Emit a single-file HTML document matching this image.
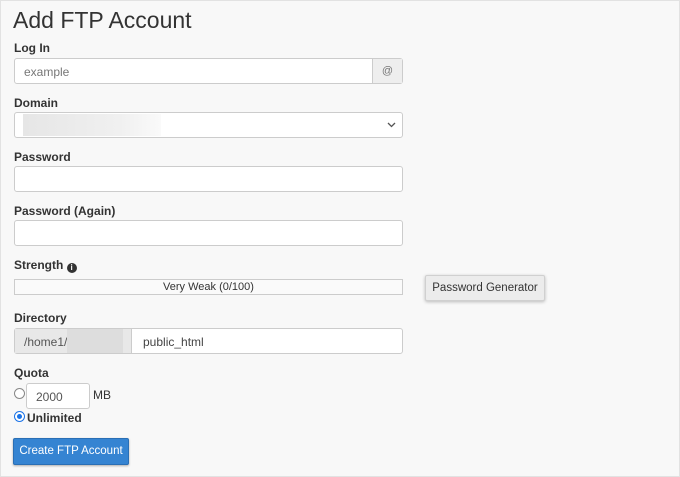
<!DOCTYPE html><html><head><style>
body{margin:0;width:680px;height:477px;background:#fff;font-family:"Liberation Sans",sans-serif;overflow:hidden}
.pg{position:absolute;left:0;top:0;width:678px;height:475px;background:#f8f8f8;border:1px solid #e2e2e2}
.a{position:absolute}
.l{position:absolute;left:13px;font-size:12px;font-weight:bold;color:#333}
.in{position:absolute;left:13px;width:387px;height:24px;background:#fff;border:1px solid #ccc;border-radius:3px;font-size:12px;color:#555;box-sizing:content-box}
</style></head><body><div class="pg">
<div class="a" style="left:12px;top:6px;font-size:23px;color:#333">Add FTP Account</div>
<div class="l" style="top:40px">Log In</div>
<div class="in" style="top:57px"><span class="a" style="left:9px;top:6px;color:#777">example</span>
<div class="a" style="right:0;top:0;width:29px;height:24px;background:#eee;border-left:1px solid #ccc;text-align:center;line-height:24px;color:#777;font-size:11px">@</div></div>
<div class="l" style="top:95px">Domain</div>
<div class="in" style="top:111px"><div class="a" style="left:8px;top:1px;width:138px;height:22px;background:linear-gradient(90deg,#e6e6e6,#f0f0f0 70%,#fafafa)"></div>
<svg class="a" style="right:6px;top:9px" width="9" height="6"><path d="M1 1l3.5 3.5L8 1" stroke="#555" fill="none" stroke-width="1.3"/></svg></div>
<div class="l" style="top:149px">Password</div>
<div class="in" style="top:165px"></div>
<div class="l" style="top:203px">Password (Again)</div>
<div class="in" style="top:219px"></div>
<div class="l" style="top:257px">Strength <span style="display:inline-block;width:10px;height:10px;border-radius:50%;background:#333;color:#fff;font-size:8px;line-height:10px;text-align:center;vertical-align:-1px">i</span></div>
<div class="a" style="left:13px;top:278px;width:387px;height:14px;background:#fafafa;border:1px solid #ccc;text-align:center;font-size:11px;line-height:14px;color:#333">Very Weak (0/100)</div>
<div class="a" style="left:424px;top:274px;width:118px;height:24px;background:#ececec;border:1px solid #d0d0d0;border-radius:2px;box-shadow:0 1px 3px rgba(0,0,0,.25);font-size:11.5px;line-height:24px;text-align:center;color:#333">Password Generator</div>
<div class="l" style="top:310px">Directory</div>
<div class="in" style="top:327px"><div class="a" style="left:0;top:0;width:116px;height:24px;background:#e8e8e8;border-right:1px solid #ccc"><span class="a" style="left:9px;top:6px">/home1/</span><div class="a" style="left:52px;top:0;width:56px;height:24px;background:#ddd"></div></div><span class="a" style="left:128px;top:6px;color:#444">public_html</span></div>
<div class="l" style="top:365px">Quota</div>
<div class="a" style="left:13px;top:387px;width:9px;height:9px;border:1px solid #888;border-radius:50%;background:#fff"></div>
<div class="a" style="left:25px;top:382px;width:62px;height:24px;background:#fff;border:1px solid #ccc;border-radius:3px;font-size:12px;color:#555"><span class="a" style="left:9px;top:6px">2000</span></div>
<div class="a" style="left:92px;top:387px;font-size:12px;color:#333">MB</div>
<div class="a" style="left:13px;top:410px;width:9px;height:9px;border:1px solid #1a73e8;border-radius:50%;background:#fff"><div class="a" style="left:2px;top:2px;width:5px;height:5px;border-radius:50%;background:#1a73e8"></div></div>
<div class="a" style="left:26px;top:410px;font-size:12px;font-weight:bold;color:#333">Unlimited</div>
<div class="a" style="left:12px;top:437px;width:114px;height:25px;background:#3584d2;border:1px solid #2a6fb5;border-radius:2px;box-shadow:0 1px 2px rgba(0,0,0,.3);color:#fff;font-size:11.5px;line-height:25px;text-align:center">Create FTP Account</div>
</div></body></html>
